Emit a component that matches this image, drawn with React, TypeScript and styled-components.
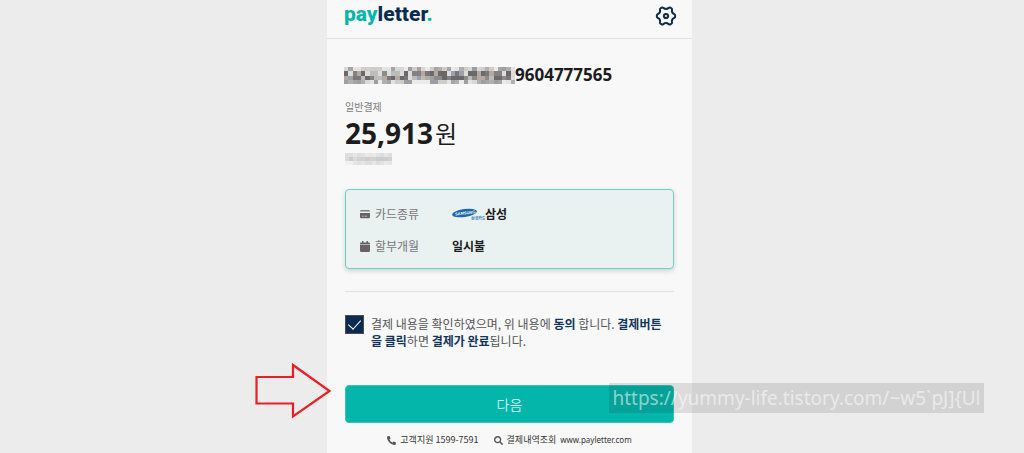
import React from "react";
import styled, { createGlobalStyle } from "styled-components";
import { FaPhoneAlt, FaSearch } from "react-icons/fa";

const Global = createGlobalStyle`
  * { box-sizing: border-box; }
  html { background: #ececec; }
  body {
    margin: 0;
    font-family: "Noto Sans", "Noto Sans CJK KR", sans-serif;
    color: #1c1c1e;
  }
`;

const Page = styled.div`
  display: flex;
  justify-content: center;
  min-height: 100vh;
  padding-right: 5px;
`;

const Panel = styled.main`
  width: 100%;
  max-width: 365px;
  background: #f8f8f8;
`;

const Header = styled.header`
  display: flex;
  justify-content: space-between;
  align-items: flex-start;
  height: 39px;
  padding: 0 15px 0 17px;
  border-bottom: 1px solid #e1e1e1;
`;

const Logo = styled.a`
  font: 800 21px/28px Roboto, sans-serif;
  color: #0b2c50;
  text-decoration: none;
  span { color: #04b5aa; }
`;

const IconButton = styled.button`
  display: flex;
  margin-top: 5px;
  padding: 0;
  border: 0;
  background: none;
  color: #0b2c50;
`;

const Content = styled.div`
  padding: 26px 18px 2px;
`;

const OrderTitle = styled.h1`
  display: flex;
  align-items: center;
  height: 20px;
  margin: 0 0 16px -1px;
  font-size: 17px;
  line-height: 20px;
  font-weight: 700;
`;

const Caption = styled.p`
  margin: 0;
  font: 400 10px/12px "Noto Sans CJK KR", sans-serif;
  color: #7c7c7c;
`;

const Amount = styled.p`
  display: flex;
  align-items: center;
  gap: 2px;
  margin: 0;
  height: 40px;
  font-size: 28px;
  line-height: 38px;
  font-weight: 700;
  span {
    font: 400 24px/36px "Noto Sans CJK KR", sans-serif;
  }
`;

const Mosaic = styled.svg`
  display: block;
  flex: none;
`;

const Details = styled.dl`
  display: grid;
  grid-template-columns: 92px 1fr;
  row-gap: 12px;
  margin: 24px 0 22px;
  padding: 14px 14px 12px;
  border: 1px solid #6fcfc9;
  border-radius: 4px;
  background: #eaf1f1;
  box-shadow: 0 2px 5px rgba(0, 0, 0, 0.16);
  font: 400 12px/20px "Noto Sans CJK KR", sans-serif;
  dt, dd {
    display: flex;
    align-items: center;
    margin: 0;
  }
  dt { gap: 5px; color: #777; }
  dt svg { color: #686264; }
  dd { font-weight: 700; }
`;

const Agreement = styled.label`
  display: flex;
  align-items: flex-start;
  gap: 7px;
  padding: 23px 12px 0 0;
  border-top: 1px solid #e1e1e1;
  font: 400 12px/17px "Noto Sans CJK KR", sans-serif;
  color: #555;
  word-break: break-all;
  b { color: #12365c; }
`;

const Check = styled.input`
  appearance: none;
  flex: none;
  display: flex;
  justify-content: center;
  width: 19px;
  height: 19px;
  margin: 0;
  border: 1px solid #4b4b50;
  background: #0b2c50;
  &:checked::after {
    content: "";
    width: 6px;
    height: 11px;
    margin-top: 1px;
    border: solid #fff;
    border-width: 0 1px 1px 0;
    transform: rotate(42deg);
  }
`;

const Action = styled.div`
  position: relative;
  margin-top: 36px;
`;

const NextButton = styled.button`
  display: block;
  width: 100%;
  height: 38px;
  padding: 0;
  border: 1px solid #35c3ba;
  border-radius: 4px;
  background: #04b5aa;
  color: #f2fffe;
  font: 300 14px/36px "Noto Sans CJK KR", sans-serif;
`;

const Arrow = styled.svg`
  position: absolute;
  left: -91px;
  top: -24px;
`;

const Watermark = styled.span`
  position: absolute;
  left: 264px;
  top: -2px;
  width: 375px;
  height: 30px;
  background: rgba(0, 0, 0, 0.11);
  color: rgba(255, 255, 255, 0.55);
  font-size: 19px;
  line-height: 30px;
  text-align: center;
  white-space: nowrap;
`;

const Footer = styled.footer`
  display: flex;
  justify-content: center;
  gap: 15px;
  padding-top: 10px;
  font: 400 9px/14px "Noto Sans CJK KR", sans-serif;
  color: #333;
`;

const FooterItem = styled.a`
  display: flex;
  align-items: center;
  gap: 4px;
  color: inherit;
  text-decoration: none;
  white-space: nowrap;
  svg { color: #555; }
`;

const SiteName = styled.span`
  font: 400 8px/14px "Noto Sans", sans-serif;
`;

const darkTones = ["#8e8a8b", "#bdbcbc", "#6c696a", "#9aa3ad", "#b4aaa1", "#7b7778", "#dcdcdc", "#6b6869", "#858182"];
const lightTones = ["#d8d8d8", "#b0b0b0", "#ebebeb", "#9b9fa4", "#d0ccc8", "#e3e3e3", "#a5a5a5"];
const faintTones = ["#dedede", "#e9e9e9", "#e2e2e2", "#f0f0f0", "#e6e6e6"];
const faintMiddle = ["#cccccc", "#d4d2d0", "#dadada"];

type MaskProps = { cols: number; rows: number; width: number; height: number; faint?: boolean };

function Mask({ cols, rows, width, height, faint }: MaskProps) {
  const cells = [];
  for (let y = 0; y < rows; y++) {
    for (let x = 0; x < cols; x++) {
      const seed = (x * x * 7 + x * 13 + y * 29 + x * y * 11) % 97;
      const middle = y > 0 && y < rows - 1;
      const tones = faint ? (middle ? faintMiddle : faintTones) : middle ? darkTones : lightTones;
      cells.push(<rect key={`${x}-${y}`} x={x} y={y} width="1" height="1" fill={tones[seed % tones.length]} />);
    }
  }
  return (
    <Mosaic width={width} height={height} viewBox={`0 0 ${cols} ${rows}`} preserveAspectRatio="none" shapeRendering="crispEdges" aria-hidden="true">
      {cells}
    </Mosaic>
  );
}

function GearIcon() {
  return (
    <svg width="22" height="22" viewBox="0 0 22 22" fill="none" stroke="currentColor" strokeWidth="2" strokeLinejoin="round" aria-hidden="true">
      <path d="M6.6 2.7 Q7.4 2.2 8.3 2.9 Q11 4.9 13.7 2.9 Q14.6 2.2 15.4 2.7 L16.6 3.5 Q17.3 4 17 5 Q16.4 8.1 19.3 9.1 Q20.2 9.6 20.2 11 Q20.2 12.4 19.3 12.9 Q16.4 13.9 17 17 Q17.3 18 16.6 18.5 L15.4 19.3 Q14.6 19.8 13.7 19.1 Q11 17.1 8.3 19.1 Q7.4 19.8 6.6 19.3 L5.4 18.5 Q4.7 18 5 17 Q5.6 13.9 2.7 12.9 Q1.8 12.4 1.8 11 Q1.8 9.6 2.7 9.1 Q5.6 8.1 5 5 Q4.7 4 5.4 3.5 Z" />
      <circle cx="11" cy="11" r="2.1" />
    </svg>
  );
}

function CardIcon() {
  return (
    <svg width="10" height="10" viewBox="0 0 10 10" fill="currentColor" aria-hidden="true">
      <path d="M1.200 1 H8.800 Q10 1 10 2.400 H0 Q0 1 1.200 1 Z" opacity=".8" />
      <path d="M0 4 H10 V8 Q10 9.200 8.800 9.200 H1.200 Q0 9.200 0 8 Z" />
      <path d="M2 7.200 H3.600 M4.600 7.200 H7" stroke="#c9cccc" strokeWidth=".8" />
    </svg>
  );
}

function CalendarIcon() {
  return (
    <svg width="10" height="11" viewBox="0 0 10 11" fill="currentColor" aria-hidden="true">
      <path d="M2 0 H3.500 V1.400 H6.500 V0 H8 V1.400 H9 Q10 1.400 10 2.400 V3.300 H0 V2.400 Q0 1.400 1 1.400 H2 Z" />
      <path d="M0 3.700 H10 V9.800 Q10 11 8.800 11 H1.200 Q0 11 0 9.800 Z" />
    </svg>
  );
}

function SamsungLogo() {
  return (
    <svg width="33" height="15" viewBox="0 0 33 15" aria-hidden="true">
      <ellipse cx="12.5" cy="6" rx="12.5" ry="4" fill="#1d67aa" transform="rotate(-8 12.5 6)" />
      <text x="3" y="7.500" fontSize="4" fontWeight="700" fontFamily="Liberation Sans, sans-serif" fill="#fff" transform="rotate(-6 12 6)">SAMSUNG</text>
      <text x="19" y="13" fontSize="4" fontWeight="700" fontFamily="Noto Sans CJK KR, sans-serif" fill="#3a7cb6">삼성카드</text>
    </svg>
  );
}

export default function App() {
  return (
    <>
      <Global />
      <Page>
        <Panel>
          <Header>
            <Logo href="#"><span>pay</span>letter<span>.</span></Logo>
            <IconButton type="button" aria-label="설정"><GearIcon /></IconButton>
          </Header>
          <Content>
            <OrderTitle><Mask cols={40} rows={4} width={171} height={17} />9604777565</OrderTitle>
            <Caption>일반결제</Caption>
            <Amount>25,913<span>원</span></Amount>
            <Mask cols={12} rows={3} width={47} height={12} faint />
            <Details>
              <dt><CardIcon />카드종류</dt>
              <dd><SamsungLogo />삼성</dd>
              <dt><CalendarIcon />할부개월</dt>
              <dd>일시불</dd>
            </Details>
            <Agreement>
              <Check type="checkbox" defaultChecked />
              <span>
                결제 내용을 확인하였으며, 위 내용에 <b>동의</b> 합니다. <b>결제버튼을 클릭</b>하면 <b>결제가 완료</b>됩니다.
              </span>
            </Agreement>
            <Action>
              <NextButton type="button">다음</NextButton>
              <Arrow width="78" height="60" viewBox="0 0 78 60" fill="none" stroke="#ee1c25" strokeWidth="2.2" aria-hidden="true">
                <path d="M2.500 16 H39 V4 L75.500 30 L39 55.500 V42.500 H2.500 Z" />
              </Arrow>
              <Watermark>https://yummy-life.tistory.com/~w5`pJ]&#123;Ul</Watermark>
            </Action>
            <Footer>
              <FooterItem href="#"><FaPhoneAlt size={9} />고객지원 1599-7591</FooterItem>
              <FooterItem href="#"><FaSearch size={9} />결제내역조회 <SiteName>www.payletter.com</SiteName></FooterItem>
            </Footer>
          </Content>
        </Panel>
      </Page>
    </>
  );
}
